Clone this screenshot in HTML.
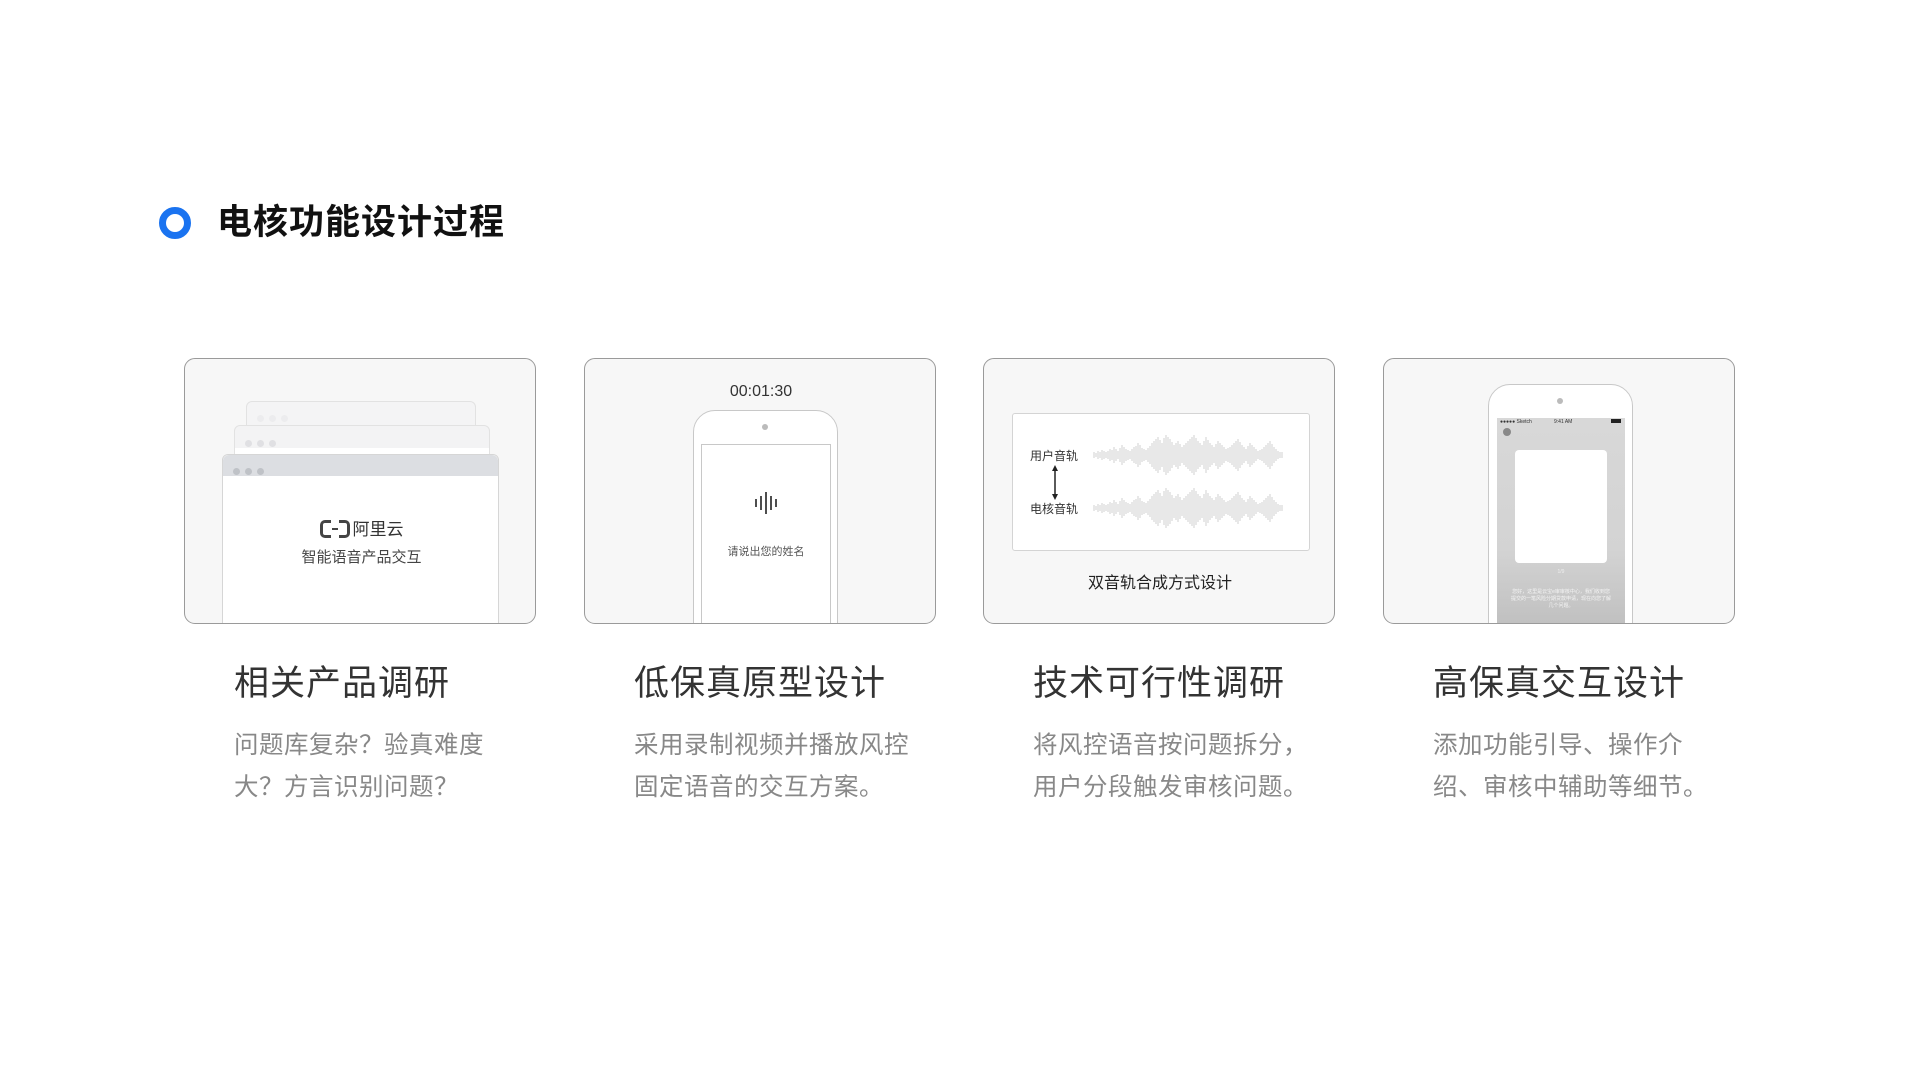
<!DOCTYPE html>
<html><head><meta charset="utf-8">
<style>
*{margin:0;padding:0;box-sizing:border-box}
body{width:1920px;height:1080px;background:#fff;position:relative;overflow:hidden;font-family:"Liberation Sans","Noto Sans CJK SC",sans-serif}
.abs{position:absolute}
.ring{left:159px;top:207px;width:32px;height:32px;border-radius:50%;border:7px solid #1a73f0}
.title{left:217px;top:199px;font-size:35px;font-weight:bold;color:#111;line-height:48px;letter-spacing:1px}
.card{top:358px;width:352px;height:266px;border:1.5px solid #9a9a9a;border-radius:11px;background:#f7f7f7;overflow:hidden}
.h{top:662px;font-size:35px;color:#333;line-height:44px;letter-spacing:1px}
.d{top:725px;font-size:24.5px;color:#888;line-height:42px;letter-spacing:0.5px}
.win{background:#fff;border:1px solid #e2e2e2;border-radius:6px 6px 0 0}
.dots{position:absolute;left:10px;top:7px}
.dots i{display:inline-block;width:7px;height:7px;border-radius:50%;margin-right:5px}
.phone{border:1.5px solid #c8c8c8;border-radius:22px 22px 0 0;background:#fff}
</style></head><body>
<div class="abs ring"></div>
<div class="abs title">电核功能设计过程</div>

<!-- card 1 -->
<div class="abs card" style="left:184px">
  <div class="abs win" style="left:61px;top:42px;width:230px;height:40px;background:#f4f4f5"><div class="dots"><i style="background:#ececee"></i><i style="background:#ececee"></i><i style="background:#ececee"></i></div></div>
  <div class="abs win" style="left:49px;top:66px;width:256px;height:40px;background:#f3f3f4"><div class="dots" style="top:8px"><i style="background:#e0e0e3"></i><i style="background:#e0e0e3"></i><i style="background:#e0e0e3"></i></div><div class="abs" style="left:0;right:0;top:22px;bottom:0;background:#fff"></div></div>
  <div class="abs win" style="left:37px;top:95px;width:277px;height:180px;border-color:#d6d6d6">
    <div class="abs" style="left:0;right:0;top:0;height:21px;background:#dcdee2;border-radius:6px 6px 0 0"></div>
    <div class="dots" style="top:7px"><i style="background:#bfc2c7"></i><i style="background:#bfc2c7"></i><i style="background:#bfc2c7"></i></div>
    <div class="abs" style="left:0;width:277px;top:60px;text-align:center;font-size:17px;color:#333"><span style="display:inline-block;width:30px;height:18px;vertical-align:-3px;position:relative;margin-right:3px"><span style="position:absolute;left:0;top:0;width:11px;height:18px;border:3.5px solid #444;border-right:none;border-radius:5px 0 0 5px"></span><span style="position:absolute;right:0;top:0;width:11px;height:18px;border:3.5px solid #444;border-left:none;border-radius:0 5px 5px 0"></span><span style="position:absolute;left:12px;top:8px;width:6px;height:1.5px;background:#444"></span></span>阿里云</div>
    <div class="abs" style="left:0;width:277px;top:91px;text-align:center;font-size:15px;color:#444">智能语音产品交互</div>
  </div>
</div>

<!-- card 2 -->
<div class="abs card" style="left:584px">
  <div class="abs" style="left:0;width:352px;top:24px;text-align:center;font-size:16px;color:#333">00:01:30</div>
  <div class="abs phone" style="left:108px;top:51px;width:145px;height:240px"></div>
  <div class="abs" style="left:177px;top:65px;width:6px;height:6px;border-radius:50%;background:#bbb"></div>
  <div class="abs" style="left:116px;top:85px;width:130px;height:200px;border:1.5px solid #c8c8c8;background:#fff"></div>
  <svg class="abs" style="left:169px;top:132px" width="24" height="24"><g stroke="#222" stroke-width="1.6"><path d="M2 8V16M7 5V19M12 1V23M17 5V19M22 8V16"/></g></svg>
  <div class="abs" style="left:116px;width:130px;top:184px;text-align:center;font-size:11px;color:#555">请说出您的姓名</div>
</div>

<!-- card 3 -->
<div class="abs card" style="left:983px">
  <div class="abs" style="left:28px;top:54px;width:298px;height:138px;background:#fff;border:1px solid #d4d4d4;border-radius:3px"></div>
  <div class="abs" style="left:46px;top:88px;font-size:12px;color:#333">用户音轨</div>
  <div class="abs" style="left:46px;top:141px;font-size:12px;color:#333">电核音轨</div>
  <svg class="abs" style="left:0;top:0" width="352" height="266">
    <path d="M71 109V138" stroke="#222" stroke-width="1.5"/>
    <path d="M68 112L71 106L74 112ZM68 135L71 141L74 135Z" fill="#222"/>
    <defs><path id="w" d="M110-3V3M114-4V4M118-5V5M122-3V3M126-6V6M130-8V8M134-4V4M138-10V10M142-6V6M146-4V4M150-8V8M154-12V12M158-7V7M162-5V5M166-9V9M170-14V14M174-18V18M178-12V12M182-20V20M186-16V16M190-10V10M194-14V14M198-8V8M202-12V12M206-16V16M210-20V20M214-14V14M218-10V10M222-18V18M226-12V12M230-8V8M234-14V14M238-10V10M242-6V6M246-8V8M250-12V12M254-16V16M258-10V10M262-6V6M266-12V12M270-8V8M274-4V4M278-6V6M282-10V10M286-14V14M290-8V8M294-4V4M298-3V3M112-2V2M116-3V3M120-4V4M124-4V4M128-5V5M132-6V6M136-7V7M140-8V8M144-5V5M148-6V6M152-9V9M156-10V10M160-6V6M164-7V7M168-12V12M172-16V16M176-15V15M180-17V17M184-18V18M188-13V13M192-12V12M196-11V11M200-10V10M204-14V14M208-18V18M212-17V17M216-12V12M220-14V14M224-15V15M228-10V10M232-11V11M236-12V12M240-8V8M244-7V7M248-10V10M252-14V14M256-13V13M260-8V8M264-9V9M268-10V10M272-6V6M276-5V5M280-8V8M284-12V12M288-11V11M292-6V6M296-3V3" stroke="#b4b4b4" stroke-width="0.6"/></defs>
    <use href="#w" y="96"/>
    <use href="#w" y="149"/>
  </svg>
  <div class="abs" style="left:0;width:352px;top:210px;text-align:center;font-size:16px;color:#222">双音轨合成方式设计</div>
</div>

<!-- card 4 -->
<div class="abs card" style="left:1383px">
  <div class="abs phone" style="left:104px;top:25px;width:145px;height:260px"></div>
  <div class="abs" style="left:173px;top:39px;width:6px;height:6px;border-radius:50%;background:#bbb"></div>
  <div class="abs" style="left:113px;top:59px;width:128px;height:220px;background:linear-gradient(#d8d8d8,#d3d3d3 60%,#bdbdbd)">
    <div class="abs" style="left:3px;top:1px;font-size:5px;color:#333">●●●●● Sketch</div>
    <div class="abs" style="left:57px;top:1px;font-size:5px;color:#333">9:41 AM</div>
    <div class="abs" style="right:4px;top:1px;width:10px;height:4px;background:#222"></div>
    <div class="abs" style="left:6px;top:10px;width:8px;height:8px;border-radius:50%;background:#888"></div>
    <div class="abs" style="left:18px;top:32px;width:92px;height:113px;background:#fff;border-radius:4px"></div>
    <div class="abs" style="left:0;width:128px;top:151px;text-align:center;font-size:5px;color:#eee">1/9</div>
    <div class="abs" style="left:13px;width:102px;top:171px;text-align:center;font-size:5px;line-height:7px;color:#f4f4f4">您好，这里是云宝e审审核中心，我们收到您提交的一笔风险分期贷款申请，现在向您了解几个问题。</div>
  </div>
</div>

<div class="abs h" style="left:234px">相关产品调研</div>
<div class="abs d" style="left:234px">问题库复杂？验真难度<br>大？方言识别问题？</div>
<div class="abs h" style="left:634px">低保真原型设计</div>
<div class="abs d" style="left:634px">采用录制视频并播放风控<br>固定语音的交互方案。</div>
<div class="abs h" style="left:1033px">技术可行性调研</div>
<div class="abs d" style="left:1033px">将风控语音按问题拆分，<br>用户分段触发审核问题。</div>
<div class="abs h" style="left:1433px">高保真交互设计</div>
<div class="abs d" style="left:1433px">添加功能引导、操作介<br>绍、审核中辅助等细节。</div>
</body></html>
